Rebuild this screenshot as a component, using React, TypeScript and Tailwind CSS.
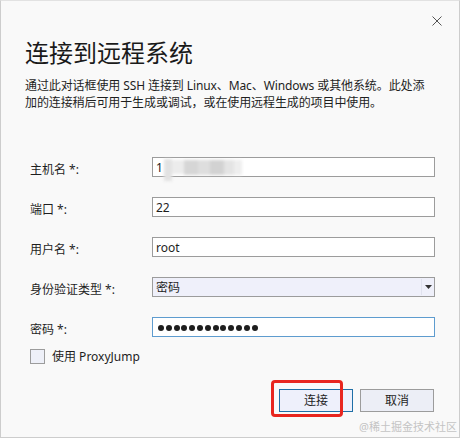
import React from "react";

const font = { fontFamily: '"Noto Sans", "Noto Sans CJK SC", sans-serif' };

function Label({ children }: { children: React.ReactNode }) {
  return (
    <div className="h-[20px] pt-[3px] text-[12px] leading-[20px] text-[#1e1e1e] whitespace-nowrap">
      {children}
    </div>
  );
}

function TextBox({ children, focused }: { children?: React.ReactNode; focused?: boolean }) {
  return (
    <div
      className={`h-[20px] border bg-white pl-[3px] pt-[2px] text-[12px] leading-[18px] text-[#1e1e1e] flex items-center ${
        focused ? "border-[#5e9ccf]" : "border-[#9c9c9c]"
      }`}
    >
      {children}
    </div>
  );
}

export default function App() {
  return (
    <div
      style={font}
      className="relative w-[460px] h-[438px] bg-[#f9f9f9] border border-[#cdcdcd] border-t-[#e2e2e2] overflow-hidden flex flex-col"
    >
      <div className="flex justify-end pt-[15px] pr-[17px]">
        <svg width="10" height="10" viewBox="0 0 10 10">
          <path d="M0.5 0.5 L9.5 9.5 M9.5 0.5 L0.5 9.5" stroke="#555" strokeWidth="1" />
        </svg>
      </div>

      <div className="mt-[11px] pl-[24px] text-[24px] leading-[32px] text-[#1a1a1a] whitespace-nowrap">
        连接到远程系统
      </div>

      <div className="mt-[8px] pl-[24px] text-[12px] leading-[17px] text-[#1e1e1e] tracking-[-0.1px]">
        <div className="whitespace-nowrap">
          通过此对话框使用 SSH 连接到 Linux、Mac、Windows 或其他系统。此处添
        </div>
        <div className="whitespace-nowrap">加的连接稍后可用于生成或调试，或在使用远程生成的项目中使用。</div>
      </div>

      <div className="mt-[46px] pl-[29px] pr-[24px] grid grid-cols-[122px_1fr] gap-y-[20px]">
        <Label>主机名 *:</Label>
        <TextBox>
          <span>1</span>
          <span className="relative ml-[1px] h-[18px] flex items-start blur-[1.5px]">
            <span className="w-[8px] h-[22px] bg-[#e2e2e2]" />
            <span className="w-[12px] h-[14px] mt-[1px] bg-[#ececec]" />
            <span className="w-[14px] h-[15px] mt-[1px] bg-[#d6d6d6]" />
            <span className="w-[12px] h-[15px] mt-[1px] bg-[#dedede]" />
            <span className="w-[14px] h-[15px] mt-[1px] bg-[#d2d2d2]" />
            <span className="w-[10px] h-[15px] mt-[1px] bg-[#e4e4e4]" />
            <span className="w-[8px] h-[15px] mt-[1px] bg-[#eeeeee]" />
          </span>
        </TextBox>

        <Label>端口 *:</Label>
        <TextBox>22</TextBox>

        <Label>用户名 *:</Label>
        <TextBox>root</TextBox>

        <Label>身份验证类型 *:</Label>
        <div className="h-[20px] border border-[#9c9c9c] bg-[#eff0fa] flex items-center text-[12px] leading-[18px] text-[#1e1e1e]">
          <span className="flex-1 pl-[3px] pt-[2px]">密码</span>
          <span className="w-px h-[16px] bg-[#e0e2ee]" />
          <span className="w-[12px] flex justify-center">
            <svg width="7" height="4" viewBox="0 0 7 4">
              <path d="M0 0 L7 0 L3.5 4 Z" fill="#333" />
            </svg>
          </span>
        </div>

        <Label>密码 *:</Label>
        <div className="h-[20px] border border-[#5e9ccf] bg-white pl-[5px] pt-[1px] flex items-center gap-[1.8px]">
          {Array.from({ length: 13 }).map((_, i) => (
            <span key={i} className="w-[6px] h-[6px] rounded-full bg-[#1e1e1e]" />
          ))}
        </div>
      </div>

      <div className="mt-[12px] pl-[29px] flex items-center gap-[7px]">
        <span className="w-[15px] h-[15px] border border-[#9c9c9c] bg-[#eef0f8]" />
        <span className="text-[12px] leading-[15px] text-[#1e1e1e]">使用 ProxyJump</span>
      </div>

      <div className="mt-[25px] pr-[25px] flex justify-end gap-[7px]">
        <div className="relative">
          <div className="w-[74px] h-[23px] border border-[#1f6fa6] bg-[#eef0fb] flex items-center justify-center text-[12px] text-[#1e1e1e]">
            连接
          </div>
          <div className="absolute left-[-8px] top-[-9px] w-[72px] h-[37px] border-[3px] border-[#e8261f] rounded-[4px]" />
        </div>
        <div className="w-[74px] h-[23px] border border-[#9c9c9c] bg-[#eceef6] flex items-center justify-center text-[12px] text-[#1e1e1e]">
          取消
        </div>
      </div>

      <div className="absolute right-[2px] bottom-[3px] text-[11px] leading-[14px] text-[#c4c4c4] whitespace-nowrap">
        @稀土掘金技术社区
      </div>
    </div>
  );
}
